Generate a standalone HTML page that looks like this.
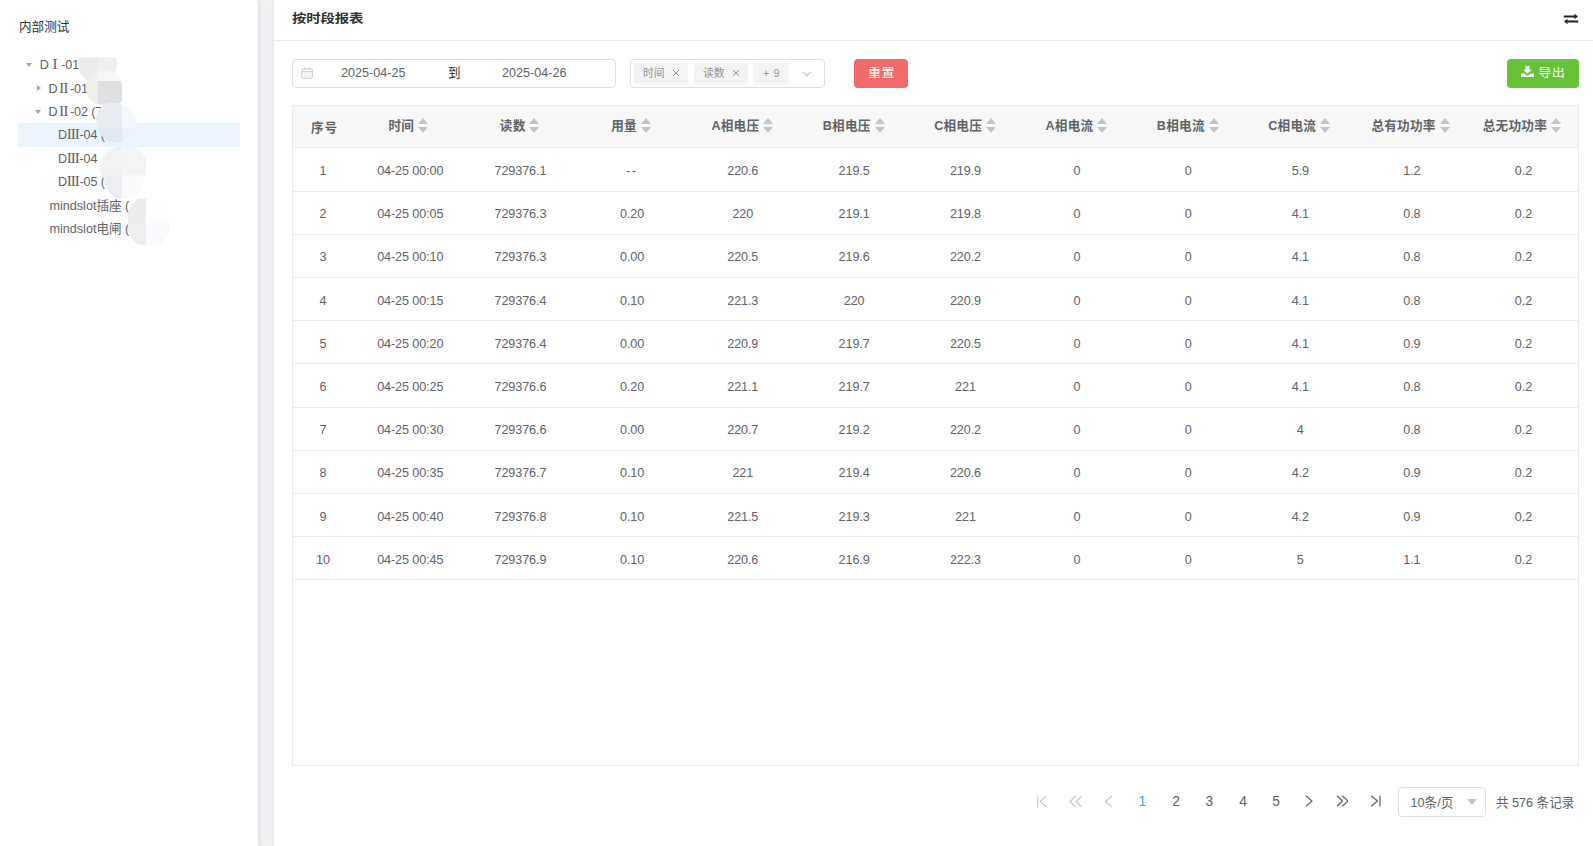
<!DOCTYPE html>
<html lang="zh-CN">
<head>
<meta charset="utf-8">
<title>按时段报表</title>
<style>
*{box-sizing:border-box;margin:0;padding:0}
html,body{width:1593px;height:846px;overflow:hidden;background:#eff0f2}
body{position:relative;font-family:"Liberation Sans","Noto Sans CJK SC",sans-serif;font-size:12.6px;color:#606266}
/* sidebar */
#side{position:absolute;left:0;top:0;width:258px;height:846px;background:#fff;border-radius:0 3px 0 0;box-shadow:1px 0 5px rgba(0,21,41,.09)}
#side .ttl{position:absolute;left:19px;top:18px;font-size:12.6px;line-height:18px;color:#303133;letter-spacing:0;white-space:nowrap}
.tn{position:absolute;left:18px;width:222px;height:23.4px;line-height:23.4px;font-size:12.6px;color:#606266;white-space:nowrap}
.tn.cur{background:#ecf4fe}
.tn span{position:absolute;top:0}
.tn em{font-style:normal;font-family:"Noto Serif CJK SC",serif;font-weight:600;line-height:0}
.ar{position:absolute;width:0;height:0}
.ar.d{border-left:3.3px solid transparent;border-right:3.3px solid transparent;border-top:4.3px solid #a3a6ad}
.ar.r{border-top:3.4px solid transparent;border-bottom:3.4px solid transparent;border-left:4.3px solid #a3a6ad}
/* main */
#main{position:absolute;left:274px;top:0;width:1319px;height:846px;background:#fff;border-radius:3px 0 0 0;box-shadow:-1px 0 4px rgba(0,21,41,.05)}
#hd{position:absolute;left:0;top:0;width:100%;height:41px;border-bottom:1px solid #e8ebf3}
#hd .t{position:absolute;left:17.9px;top:9.2px;font-size:14.4px;line-height:20px;font-weight:bold;color:#303133;letter-spacing:-.1px;transform:scaleY(.85);transform-origin:50% 50%;white-space:nowrap}
#hd svg{position:absolute;left:1289.1px;top:13.1px}
/* filter */
.dr{position:absolute;left:18px;top:59px;width:323.5px;height:29px;border:1px solid #dcdfe6;border-radius:4px}
.dr svg{position:absolute;left:8px;top:7.2px}
.dr span{position:absolute;top:0;line-height:27px;font-size:12.6px;color:#606266;white-space:nowrap}
.sel{position:absolute;left:356px;top:59px;width:195px;height:29px;border:1px solid #dcdfe6;border-radius:4px}
.tag{position:absolute;top:3.2px;height:20.5px;background:#f4f4f5;border-radius:3.5px;font-size:10.8px;line-height:20px;color:#909399;white-space:nowrap}
.tag span{position:absolute;top:0}
.tag svg{position:absolute;top:6.3px}
.btn{position:absolute;top:59px;height:29px;border-radius:4px;color:#fff;font-size:13.2px;line-height:29px;text-align:center;white-space:nowrap}
.btn b{position:absolute;top:-1.2px;font-weight:normal;transform:scaleY(.9);letter-spacing:.3px}
.btn.red{left:580px;width:54px;background:#f26b6b}
.btn.grn{left:1233px;width:72px;background:#67c23a}
/* table */
#tb{position:absolute;left:18px;top:105px;width:1287px;height:661px;border:1px solid #e8eaec}
.th{position:absolute;left:0;top:0;width:1285px;height:42px;background:#f8f8f9;border-bottom:1px solid #e8eaec;display:flex;color:#606266}
.th b{font-weight:bold;letter-spacing:.25px}
.th .c0 b{position:relative;top:1.8px;letter-spacing:.9px;left:1.4px}
.th .c,.th .c0{line-height:41px}
.tr{position:absolute;left:0;width:1285px;border-bottom:1px solid #e8eaec;display:flex}
.c0{width:60px;text-align:center;white-space:nowrap;flex:none}
.c{width:111.36px;text-align:center;white-space:nowrap;flex:none}
.tr{line-height:44px}
.tr .c,.tr .c0{letter-spacing:-.1px}
.so{display:inline-block;position:relative;width:10.8px;height:14px;margin-left:4px;vertical-align:middle;top:-1px}
.so:before,.so:after{content:"";position:absolute;left:0;width:0;height:0;border-left:5.4px solid transparent;border-right:5.4px solid transparent}
.so:before{top:-.2px;border-bottom:6px solid #c0c4cc}
.so:after{top:8px;border-top:6px solid #c0c4cc}
/* pager */
#pg{position:absolute;left:0;top:786px;width:1319px;height:30px}
#pg .n{position:absolute;top:.9px;width:30px;margin-left:-15px;text-align:center;font-size:13.8px;line-height:30px;color:#606266}
#pg .n.on{color:#409eff}
#pg svg{position:absolute}
#pg .ps{position:absolute;left:1124px;top:1px;width:87.5px;height:29.5px;border:1px solid #dcdfe6;border-radius:4px}
#pg .ps span{position:absolute;left:11.6px;top:1.2px;line-height:29px;font-size:12.6px}
#pg .ps i{position:absolute;left:68px;top:11px;width:0;height:0;border-left:5.5px solid transparent;border-right:5.5px solid transparent;border-top:6.5px solid #c0c4cc}
#pg .tot{position:absolute;left:1222px;top:2px;line-height:30px;font-size:12.6px;white-space:nowrap}
</style>
</head>
<body>
<div id="side">
  <div class="ttl">内部测试</div>
  <div class="tn" style="top:54px"><i class="ar d" style="left:8px;top:9px"></i><span style="left:21.7px;letter-spacing:-.1px">D<em>Ⅰ</em>-01</span></div>
  <div class="tn" style="top:77.5px"><i class="ar r" style="left:19px;top:7.5px"></i><span style="left:30.4px;letter-spacing:-.1px">D<em>Ⅱ</em>-01</span></div>
  <div class="tn" style="top:101px"><i class="ar d" style="left:17px;top:9px"></i><span style="left:30.4px;letter-spacing:-.1px">D<em>Ⅱ</em>-02 (7</span></div>
  <div class="tn cur" style="top:123px;height:24px"><span style="left:40px;top:1px;letter-spacing:-.12px">D<em>Ⅲ</em>-04 (</span></div>
  <div class="tn" style="top:147.5px"><span style="left:40px;letter-spacing:-.12px">D<em>Ⅲ</em>-04</span></div>
  <div class="tn" style="top:171px"><span style="left:40px;letter-spacing:-.12px">D<em>Ⅲ</em>-05 (6</span></div>
  <div class="tn" style="top:194.5px"><span style="left:31.5px">mindslot插座 (</span></div>
  <div class="tn" style="top:218px"><span style="left:31.5px">mindslot电闸 (3</span></div>
  <svg style="position:absolute;left:70px;top:50px" width="110" height="200" viewBox="70 50 110 200">
    <defs>
      <clipPath id="k1"><circle cx="97.5" cy="64" r="19.5"/></clipPath>
      <clipPath id="k2"><rect x="86" y="70.6" width="36" height="34.3" rx="16.5"/><rect x="103" y="87" width="19" height="17.9" rx="5.5"/></clipPath>
      <clipPath id="k3"><circle cx="116.3" cy="123.3" r="19.4"/><circle cx="113" cy="119.2" r="17"/></clipPath>
      <clipPath id="k4"><circle cx="119.5" cy="166.7" r="19.6"/><circle cx="128" cy="166.5" r="19.6"/><circle cx="124" cy="179.5" r="19.8"/></clipPath>
      <clipPath id="k6"><rect x="128" y="197" width="41.5" height="49" rx="19"/></clipPath>
    </defs>
    <g clip-path="url(#k1)"><rect x="70" y="57.3" width="27.9" height="23.9" fill="#ececec"/><rect x="97.9" y="57.3" width="24.1" height="23.9" fill="#f0f0f0"/></g>
    <g clip-path="url(#k2)"><rect x="70" y="57.3" width="27.9" height="23.7" fill="#f1f1f1"/><rect x="97.9" y="57.3" width="24.1" height="23.7" fill="#f6f6f6"/><rect x="70" y="81" width="27.9" height="23.7" fill="#efeeed"/><rect x="97.9" y="81" width="24.1" height="23.7" fill="#dfe0e2"/></g>
    <g clip-path="url(#k3)"><rect x="90" y="103" width="32" height="25" fill="#e9edf2"/><rect x="122" y="103" width="24.1" height="25" fill="#f3f8fe"/><rect x="90" y="128" width="32" height="23.5" fill="#e1e9f4"/><rect x="122" y="128" width="24.1" height="23.5" fill="#eaf2fd"/></g>
    <g clip-path="url(#k4)"><rect x="97.9" y="146.4" width="24.1" height="5.1" fill="#eef2f8"/><rect x="122" y="146.4" width="24.1" height="5.1" fill="#f1f6fc"/><rect x="97.9" y="151.5" width="24.1" height="23.5" fill="#f2f2f2"/><rect x="122" y="151.5" width="24.1" height="23.5" fill="#f4f4f4"/><rect x="97.9" y="175" width="24.1" height="23.7" fill="#eceef1"/><rect x="122" y="175" width="24.1" height="23.7" fill="#fafafa"/></g>
    <g clip-path="url(#k6)"><rect x="122" y="198.6" width="24.1" height="23.4" fill="#ecedec"/><rect x="146.1" y="198.6" width="24.1" height="23.4" fill="#fdfdfe"/><rect x="122" y="222" width="24.1" height="24" fill="#efeeed"/><rect x="146.1" y="222" width="24.1" height="24" fill="#f8fafe"/></g>
  </svg>
</div>
<div id="main">
<div id="hd"><div class="t">按时段报表</div>
<svg width="16" height="12" viewBox="0 0 16 12"><path d="M0.8 3.5H12.5M15.2 8.5H3.5" fill="none" stroke="#1f2329" stroke-width="2"/><path d="M11.5 0.8L15 3.5L11.5 6.2Z M4.5 5.8L1 8.5L4.5 11.2Z" fill="#1f2329"/></svg>
</div>
<div class="dr">
<svg width="12.2" height="12.2" viewBox="0 0 13 13" fill="none" stroke="#c0c4cc" stroke-width="1"><rect x="1" y="2" width="11" height="10" rx="1"/><path d="M1 5H12M4 .8V3M9 .8V3"/><path d="M3.5 7.5H5M6 7.5H7.5M8.5 7.5H10M3.5 9.8H5M6 9.8H7.5M8.5 9.8H10" stroke-dasharray="1 .6"/></svg>
<span style="left:48px">2025-04-25</span><span style="left:155px;color:#303133">到</span><span style="left:209px">2025-04-26</span>
</div>
<div class="sel">
<div class="tag" style="left:3px;width:54px"><span style="left:9px">时间</span><svg style="left:38px" width="8" height="8" viewBox="0 0 8 8"><path d="M1 1L7 7M7 1L1 7" stroke="#909399" stroke-width="1" fill="none"/></svg></div>
<div class="tag" style="left:63px;width:54px"><span style="left:9px">读数</span><svg style="left:38px" width="8" height="8" viewBox="0 0 8 8"><path d="M1 1L7 7M7 1L1 7" stroke="#909399" stroke-width="1" fill="none"/></svg></div>
<div class="tag" style="left:122px;width:36px"><span style="left:10px;letter-spacing:.6px">+ 9</span></div>
<svg style="position:absolute;left:171.4px;top:11px" width="10" height="6" viewBox="0 0 10 6"><path d="M.7 .7L5 4.7L9.3 .7" stroke="#c0c4cc" stroke-width="1.1" fill="none"/></svg>
</div>
<div class="btn red"><b style="left:14px">重置</b></div>
<div class="btn grn"><svg style="position:absolute;left:14.3px;top:7px" width="13" height="11.4" viewBox="0 0 13 12" preserveAspectRatio="none"><path d="M4.5 0H8.5V4H11L6.5 8L2 4H4.5Z M0 8H3.2L6.5 10.6L9.8 8H13V12H0Z" fill="#fff"/></svg><b style="left:31.3px">导出</b></div>
<div id="tb">
<div class="th"><div class="c0"><b>序号</b></div><div class="c"><b>时间</b><i class="so"></i></div><div class="c"><b>读数</b><i class="so"></i></div><div class="c"><b>用量</b><i class="so"></i></div><div class="c"><b>A相电压</b><i class="so"></i></div><div class="c"><b>B相电压</b><i class="so"></i></div><div class="c"><b>C相电压</b><i class="so"></i></div><div class="c"><b>A相电流</b><i class="so"></i></div><div class="c"><b>B相电流</b><i class="so"></i></div><div class="c"><b>C相电流</b><i class="so"></i></div><div class="c"><b>总有功功率</b><i class="so"></i></div><div class="c"><b>总无功功率</b><i class="so"></i></div></div>
<div class="tr" style="top:42px;height:44px;line-height:46px"><div class="c0">1</div><div class="c" style="padding-left:3.2px">04-25 00:00</div><div class="c" style="padding-left:0.8px">729376.1</div><div class="c" style="padding-left:1.4px"><span style="letter-spacing:1.6px">--</span></div><div class="c">220.6</div><div class="c">219.5</div><div class="c">219.9</div><div class="c">0</div><div class="c">0</div><div class="c" style="padding-left:1.4px">5.9</div><div class="c" style="padding-left:2px">1.2</div><div class="c" style="padding-left:2.4px">0.2</div></div>
<div class="tr" style="top:86px;height:43px"><div class="c0">2</div><div class="c" style="padding-left:3.2px">04-25 00:05</div><div class="c" style="padding-left:0.8px">729376.3</div><div class="c" style="padding-left:1.4px">0.20</div><div class="c">220</div><div class="c">219.1</div><div class="c">219.8</div><div class="c">0</div><div class="c">0</div><div class="c" style="padding-left:1.4px">4.1</div><div class="c" style="padding-left:2px">0.8</div><div class="c" style="padding-left:2.4px">0.2</div></div>
<div class="tr" style="top:129px;height:43px"><div class="c0">3</div><div class="c" style="padding-left:3.2px">04-25 00:10</div><div class="c" style="padding-left:0.8px">729376.3</div><div class="c" style="padding-left:1.4px">0.00</div><div class="c">220.5</div><div class="c">219.6</div><div class="c">220.2</div><div class="c">0</div><div class="c">0</div><div class="c" style="padding-left:1.4px">4.1</div><div class="c" style="padding-left:2px">0.8</div><div class="c" style="padding-left:2.4px">0.2</div></div>
<div class="tr" style="top:172px;height:43px;line-height:46px"><div class="c0">4</div><div class="c" style="padding-left:3.2px">04-25 00:15</div><div class="c" style="padding-left:0.8px">729376.4</div><div class="c" style="padding-left:1.4px">0.10</div><div class="c">221.3</div><div class="c">220</div><div class="c">220.9</div><div class="c">0</div><div class="c">0</div><div class="c" style="padding-left:1.4px">4.1</div><div class="c" style="padding-left:2px">0.8</div><div class="c" style="padding-left:2.4px">0.2</div></div>
<div class="tr" style="top:215px;height:43px;line-height:46px"><div class="c0">5</div><div class="c" style="padding-left:3.2px">04-25 00:20</div><div class="c" style="padding-left:0.8px">729376.4</div><div class="c" style="padding-left:1.4px">0.00</div><div class="c">220.9</div><div class="c">219.7</div><div class="c">220.5</div><div class="c">0</div><div class="c">0</div><div class="c" style="padding-left:1.4px">4.1</div><div class="c" style="padding-left:2px">0.9</div><div class="c" style="padding-left:2.4px">0.2</div></div>
<div class="tr" style="top:258px;height:44px;line-height:46px"><div class="c0">6</div><div class="c" style="padding-left:3.2px">04-25 00:25</div><div class="c" style="padding-left:0.8px">729376.6</div><div class="c" style="padding-left:1.4px">0.20</div><div class="c">221.1</div><div class="c">219.7</div><div class="c">221</div><div class="c">0</div><div class="c">0</div><div class="c" style="padding-left:1.4px">4.1</div><div class="c" style="padding-left:2px">0.8</div><div class="c" style="padding-left:2.4px">0.2</div></div>
<div class="tr" style="top:302px;height:43px"><div class="c0">7</div><div class="c" style="padding-left:3.2px">04-25 00:30</div><div class="c" style="padding-left:0.8px">729376.6</div><div class="c" style="padding-left:1.4px">0.00</div><div class="c">220.7</div><div class="c">219.2</div><div class="c">220.2</div><div class="c">0</div><div class="c">0</div><div class="c" style="padding-left:1.4px">4</div><div class="c" style="padding-left:2px">0.8</div><div class="c" style="padding-left:2.4px">0.2</div></div>
<div class="tr" style="top:345px;height:43px"><div class="c0">8</div><div class="c" style="padding-left:3.2px">04-25 00:35</div><div class="c" style="padding-left:0.8px">729376.7</div><div class="c" style="padding-left:1.4px">0.10</div><div class="c">221</div><div class="c">219.4</div><div class="c">220.6</div><div class="c">0</div><div class="c">0</div><div class="c" style="padding-left:1.4px">4.2</div><div class="c" style="padding-left:2px">0.9</div><div class="c" style="padding-left:2.4px">0.2</div></div>
<div class="tr" style="top:388px;height:43px;line-height:46px"><div class="c0">9</div><div class="c" style="padding-left:3.2px">04-25 00:40</div><div class="c" style="padding-left:0.8px">729376.8</div><div class="c" style="padding-left:1.4px">0.10</div><div class="c">221.5</div><div class="c">219.3</div><div class="c">221</div><div class="c">0</div><div class="c">0</div><div class="c" style="padding-left:1.4px">4.2</div><div class="c" style="padding-left:2px">0.9</div><div class="c" style="padding-left:2.4px">0.2</div></div>
<div class="tr" style="top:431px;height:43px;line-height:46px"><div class="c0">10</div><div class="c" style="padding-left:3.2px">04-25 00:45</div><div class="c" style="padding-left:0.8px">729376.9</div><div class="c" style="padding-left:1.4px">0.10</div><div class="c">220.6</div><div class="c">216.9</div><div class="c">222.3</div><div class="c">0</div><div class="c">0</div><div class="c" style="padding-left:1.4px">5</div><div class="c" style="padding-left:2px">1.1</div><div class="c" style="padding-left:2.4px">0.2</div></div>
</div>
<div id="pg">
<svg style="left:762px;top:8.6px" width="12" height="13" viewBox="0 0 12 13"><path d="M1.8 .5V12.5M10.5 .8L4.2 6.5L10.5 12.2" fill="none" stroke="#c0c4cc" stroke-width="1.1"/></svg>
<svg style="left:795px;top:8.6px" width="14" height="13" viewBox="0 0 14 13"><path d="M7 .8L1 6.5L7 12.2M13 .8L7 6.5L13 12.2" fill="none" stroke="#c0c4cc" stroke-width="1.1"/></svg>
<svg style="left:830px;top:8.6px" width="9" height="13" viewBox="0 0 9 13"><path d="M8 .8L1.5 6.5L8 12.2" fill="none" stroke="#c0c4cc" stroke-width="1.1"/></svg>
<div class="n on" style="left:868.3px">1</div>
<div class="n" style="left:902px">2</div>
<div class="n" style="left:935.3px">3</div>
<div class="n" style="left:969px">4</div>
<div class="n" style="left:1002px">5</div>
<svg style="left:1031.4px;top:8.6px" width="8.3" height="12" viewBox="0 0 9 13"><path d="M1 .8L7.5 6.5L1 12.2" fill="none" stroke="#606266" stroke-width="1.3"/></svg>
<svg style="left:1061.5px;top:8.6px" width="12.9" height="12" viewBox="0 0 14 13"><path d="M1 .8L7 6.5L1 12.2M7 .8L13 6.5L7 12.2" fill="none" stroke="#606266" stroke-width="1.3"/></svg>
<svg style="left:1096.4px;top:8.6px" width="11.1" height="12" viewBox="0 0 12 13"><path d="M10.8 .5V12.5M1.5 .8L8 6.5L1.5 12.2" fill="none" stroke="#606266" stroke-width="1.3"/></svg>
<div class="ps"><span>10条/页</span><i></i></div>
<div class="tot">共 576 条记录</div>
</div>
</div>
</body>
</html>
